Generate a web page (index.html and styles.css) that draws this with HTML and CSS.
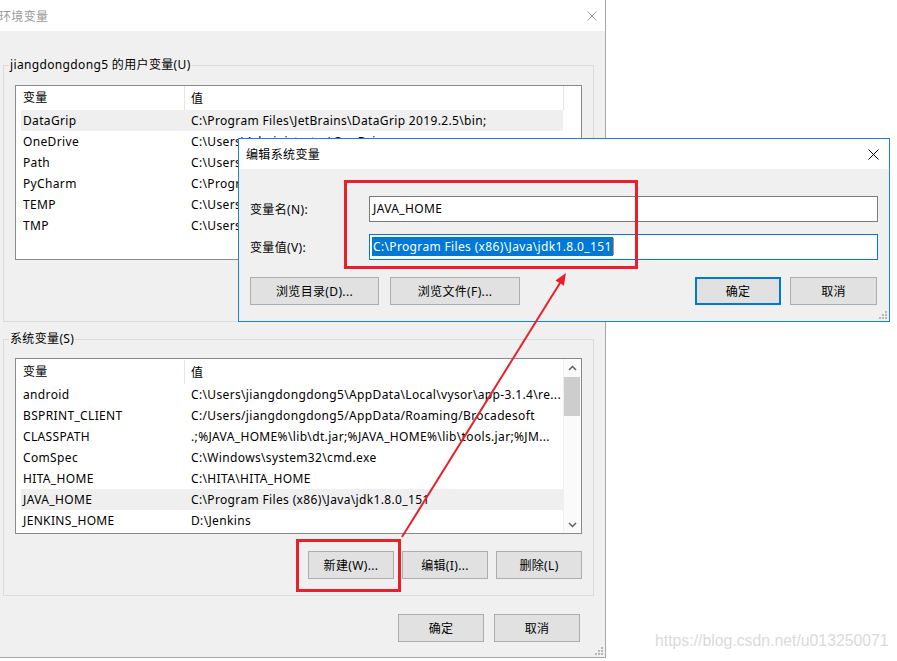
FILE: index.html
```html
<!DOCTYPE html>
<html lang="zh-CN">
<head>
  <meta charset="UTF-8" />
  <title>环境变量</title>
  <link rel="stylesheet" href="styles.css">
</head>
<body>
  <!-- Fenêtre principale -->
  <div class="env-window">
    <div class="titlebar">
      <span class="title">环境变量</span>
      <svg class="close" width="10" height="10" viewBox="0 0 10 10"><path d="M0.5 0.5L9.5 9.5M9.5 0.5L0.5 9.5" stroke="#9a9a9a" stroke-width="1"/></svg>
    </div>

    <div class="env-body">
      <fieldset class="group group-user">
        <legend>jiangdongdong5 的用户变量(U)</legend>
        <div class="list list-user">
          <div class="list-main">
            <div class="list-head"><span class="cell-name">变量</span><span class="cell-value">值</span></div>
            <div class="row selected"><span class="cell-name">DataGrip</span><span class="cell-value">C:\Program Files\JetBrains\DataGrip 2019.2.5\bin;</span></div>
            <div class="row"><span class="cell-name">OneDrive</span><span class="cell-value">C:\Users\Administrator\OneDrive</span></div>
            <div class="row"><span class="cell-name">Path</span><span class="cell-value">C:\Users\jiangdongdong5\AppData\Local\Microsoft\WindowsApps;</span></div>
            <div class="row"><span class="cell-name">PyCharm</span><span class="cell-value">C:\Program Files\JetBrains\PyCharm 2019.2\bin;</span></div>
            <div class="row"><span class="cell-name">TEMP</span><span class="cell-value">C:\Users\jiangdongdong5\AppData\Local\Temp</span></div>
            <div class="row"><span class="cell-name">TMP</span><span class="cell-value">C:\Users\jiangdongdong5\AppData\Local\Temp</span></div>
          </div>
          <div class="list-side"><div class="side-head"></div></div>
        </div>
      </fieldset>

      <fieldset class="group group-system">
        <legend>系统变量(S)</legend>
        <div class="list list-system">
          <div class="list-main">
            <div class="list-head"><span class="cell-name">变量</span><span class="cell-value">值</span></div>
            <div class="row"><span class="cell-name">android</span><span class="cell-value">C:\Users\jiangdongdong5\AppData\Local\vysor\app-3.1.4\re...</span></div>
            <div class="row"><span class="cell-name">BSPRINT_CLIENT</span><span class="cell-value">C:/Users/jiangdongdong5/AppData/Roaming/Brocadesoft</span></div>
            <div class="row"><span class="cell-name">CLASSPATH</span><span class="cell-value">.;%JAVA_HOME%\lib\dt.jar;%JAVA_HOME%\lib\tools.jar;%JM...</span></div>
            <div class="row"><span class="cell-name">ComSpec</span><span class="cell-value">C:\Windows\system32\cmd.exe</span></div>
            <div class="row"><span class="cell-name">HITA_HOME</span><span class="cell-value">C:\HITA\HITA_HOME</span></div>
            <div class="row selected"><span class="cell-name">JAVA_HOME</span><span class="cell-value">C:\Program Files (x86)\Java\jdk1.8.0_151</span></div>
            <div class="row"><span class="cell-name">JENKINS_HOME</span><span class="cell-value">D:\Jenkins</span></div>
          </div>
          <div class="scrollbar">
            <div class="sb-arrow"><svg width="9" height="6" viewBox="0 0 9 6"><path d="M1 5L4.5 1.5L8 5" fill="none" stroke="#606060" stroke-width="1.5"/></svg></div>
            <div class="sb-track"><div class="sb-thumb"></div></div>
            <div class="sb-arrow"><svg width="9" height="6" viewBox="0 0 9 6"><path d="M1 1L4.5 4.5L8 1" fill="none" stroke="#606060" stroke-width="1.5"/></svg></div>
          </div>
        </div>
        <div class="btn-row">
          <button class="btn">新建(W)...</button>
          <button class="btn">编辑(I)...</button>
          <button class="btn">删除(L)</button>
        </div>
      </fieldset>

      <div class="footer">
        <button class="btn">确定</button>
        <button class="btn">取消</button>
      </div>
    </div>
    <svg class="grip" width="8" height="8" viewBox="0 0 8 8"><g fill="#b8b8b8"><rect x="6" y="0" width="2" height="2"/><rect x="3" y="3" width="2" height="2"/><rect x="6" y="3" width="2" height="2"/><rect x="0" y="6" width="2" height="2"/><rect x="3" y="6" width="2" height="2"/><rect x="6" y="6" width="2" height="2"/></g></svg>
  </div>

  <!-- Boîte d'édition -->
  <div class="edit-dialog">
    <div class="dlg-titlebar">
      <span class="dlg-title">编辑系统变量</span>
      <svg class="close" width="11" height="11" viewBox="0 0 11 11"><path d="M0.5 0.5L10.5 10.5M10.5 0.5L0.5 10.5" stroke="#000" stroke-width="1"/></svg>
    </div>
    <div class="dlg-body">
      <div class="field">
        <span class="field-label">变量名(N):</span>
        <div class="textbox"><span class="tb-text">JAVA_HOME</span></div>
      </div>
      <div class="field">
        <span class="field-label">变量值(V):</span>
        <div class="textbox focused"><span class="tb-text sel">C:\Program Files (x86)\Java\jdk1.8.0_151</span><span class="caret"></span></div>
      </div>
      <div class="dlg-buttons">
        <div class="btn-group">
          <button class="btn btn-wide">浏览目录(D)...</button>
          <button class="btn btn-wide2">浏览文件(F)...</button>
        </div>
        <div class="btn-group right">
          <button class="btn btn-default">确定</button>
          <button class="btn btn-cancel">取消</button>
        </div>
      </div>
    </div>
    <svg class="grip" width="8" height="8" viewBox="0 0 8 8"><g fill="#b8b8b8"><rect x="6" y="0" width="2" height="2"/><rect x="3" y="3" width="2" height="2"/><rect x="6" y="3" width="2" height="2"/><rect x="0" y="6" width="2" height="2"/><rect x="3" y="6" width="2" height="2"/><rect x="6" y="6" width="2" height="2"/></g></svg>
  </div>

  <!-- Annotations -->
  <div class="mark mark-fields"></div>
  <div class="mark mark-new"></div>
  <svg class="arrow" width="897" height="661" viewBox="0 0 897 661">
    <line x1="402" y1="537" x2="560" y2="283" stroke="#e8202a" stroke-width="2"/>
    <polygon points="566,273 563.9,285.8 555.4,280.5" fill="#e8202a"/>
  </svg>

  <div class="watermark">https://blog.csdn.net/u013250071</div>
</body>
</html>
```

FILE: styles.css
```css
/* Base */
* {
  box-sizing: border-box;
}
body {
  margin: 0;
  width: 897px;
  height: 661px;
  overflow: hidden;
  position: relative;
  background: #fff;
  color: #000;
  font-family: "Noto Sans", "Noto Sans CJK SC", sans-serif;
  font-size: 12px;
  letter-spacing: 0.35px;
}

/* Fenêtre principale */
.env-window {
  position: relative;
  width: 606px;
  height: 658px;
  background: #f0f0f0;
  border-right: 1px solid #a6a6a6;
  border-bottom: 1px solid #a6a6a6;
  display: flex;
  flex-direction: column;
}

.titlebar {
  height: 31px;
  background: #fff;
  display: flex;
  align-items: center;
  justify-content: space-between;
  padding-right: 8px;
}
.title {
  color: #999;
  margin-left: -1px;
}

.env-body {
  flex: 1;
  padding: 26px 0 0 3px;
}

.group {
  margin: 0;
  width: 591px;
  min-width: 0;
  border: 1px solid #dcdcdc;
  padding: 12px 11px 16px 11px;
}
.group legend {
  margin-left: -6px;
  padding: 0 1px;
  line-height: 16px;
}
.group-user {
  padding-bottom: 61px;
}
.group-system {
  margin-top: 9px;
  padding-top: 11px;
}

/* Liste */
.list {
  display: flex;
  height: 175px;
  background: #fff;
  border: 1px solid #8a8a8a;
}
.list-system {
  height: 176px;
}
.list-main {
  flex: 1;
  min-width: 0;
  padding-left: 5px;
}
.list-head {
  height: 24px;
  display: flex;
  align-items: center;
}
.list-system .list-head {
  height: 25px;
}
.list-head .cell-name {
  height: 24px;
  line-height: 24px;
  border-right: 1px solid #e5e5e5;
}
.list-head .cell-value {
  padding-left: 6px;
}
.row {
  height: 21px;
  display: flex;
  align-items: center;
  white-space: nowrap;
}
.row.selected {
  background: #efefef;
}
.cell-name {
  width: 164px;
  flex: none;
  padding-left: 2px;
}
.row .cell-value {
  padding-left: 6px;
  overflow: hidden;
}

.list-side {
  width: 18px;
}
.side-head {
  height: 24px;
  border-left: 1px solid #e5e5e5;
}

/* Barre de défilement */
.scrollbar {
  width: 18px;
  display: flex;
  flex-direction: column;
  border-left: 1px solid #f0f0f0;
  background: #fafafa;
}
.sb-arrow {
  height: 17px;
  display: flex;
  align-items: center;
  justify-content: center;
}
.sb-track {
  flex: 1;
}
.sb-thumb {
  margin: 1px 1px 0 0;
  height: 39px;
  background: #cdcdcd;
}

/* Boutons */
.btn {
  height: 28px;
  width: 86px;
  margin: 0;
  padding: 0;
  background: #e1e1e1;
  border: 1px solid #adadad;
  font-family: "Noto Sans", "Noto Sans CJK SC", sans-serif;
  font-size: 12px;
  letter-spacing: 0.35px;
  color: #000;
}
.btn-row {
  margin-top: 17px;
  display: flex;
  justify-content: flex-end;
  gap: 8px;
}
.footer {
  margin-top: 18px;
  width: 591px;
  padding-right: 14px;
  display: flex;
  justify-content: flex-end;
  gap: 10px;
}

.grip {
  position: absolute;
  right: 2px;
  bottom: 2px;
}

/* Boîte d'édition */
.edit-dialog {
  position: absolute;
  left: 238px;
  top: 138px;
  width: 652px;
  height: 184px;
  border: 1px solid #1883d7;
  background: #f0f0f0;
}
.dlg-titlebar {
  height: 30px;
  background: #fff;
  display: flex;
  align-items: center;
  justify-content: space-between;
  padding: 0 10px 0 7px;
}
.dlg-body {
  padding: 27px 11px 16px 11px;
}
.field {
  display: flex;
  align-items: center;
}
.field + .field {
  margin-top: 12px;
}
.field-label {
  width: 119px;
  flex: none;
}
.textbox {
  flex: 1;
  height: 26px;
  background: #fff;
  border: 1px solid #7a7a7a;
  padding: 0 0 1px 2px;
  display: flex;
  align-items: center;
  white-space: nowrap;
}
.textbox.focused {
  border-color: #0078d7;
}
.tb-text {
  padding: 0 1px;
  line-height: 19px;
}
.tb-text.sel {
  background: #0078d7;
  color: #fff;
}
.caret {
  width: 1px;
  height: 17px;
  background: #e08a3c;
}
.dlg-buttons {
  margin-top: 17px;
  display: flex;
  justify-content: space-between;
}
.btn-group {
  display: flex;
  gap: 11px;
}
.btn-group.right {
  gap: 9px;
  margin-right: 1px;
}
.btn-wide {
  width: 129px;
}
.btn-wide2 {
  width: 130px;
}
.btn-default {
  border: 2px solid #0078d7;
}
.btn-cancel {
  width: 87px;
}

/* Annotations */
.mark {
  position: absolute;
  border: 3px solid #e8202a;
}
.mark-fields {
  left: 344px;
  top: 180px;
  width: 294px;
  height: 89px;
}
.mark-new {
  left: 296px;
  top: 539px;
  width: 105px;
  height: 53px;
}
.arrow {
  position: absolute;
  left: 0;
  top: 0;
  pointer-events: none;
}

.watermark {
  position: absolute;
  left: 655px;
  top: 632px;
  line-height: 18px;
  font-family: "Liberation Sans", Arial, sans-serif;
  font-size: 15.8px;
  letter-spacing: 0;
  color: #dadada;
}
```
